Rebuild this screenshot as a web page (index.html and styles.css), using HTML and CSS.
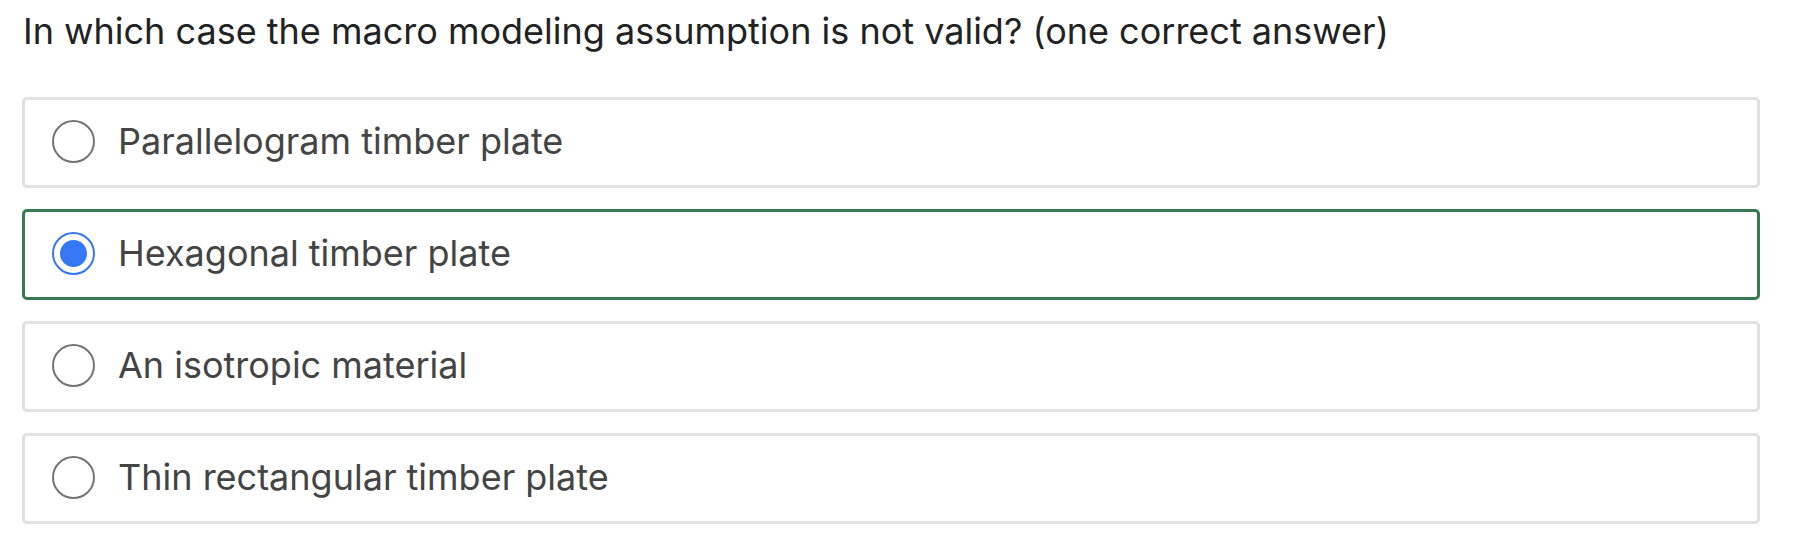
FILE: index.html
```html
<!DOCTYPE html>
<html>
<head>
<meta charset="utf-8">
<link rel="stylesheet" href="styles.css">
</head>
<body>
<div class="quiz">
  <h1 class="question">In which case the macro modeling assumption is not valid? (one correct answer)</h1>
  <div class="options">
    <label class="option">
      <span class="radio"></span>
      <span class="label">Parallelogram timber plate</span>
    </label>
    <label class="option selected">
      <span class="radio checked"></span>
      <span class="label">Hexagonal timber plate</span>
    </label>
    <label class="option">
      <span class="radio"></span>
      <span class="label">An isotropic material</span>
    </label>
    <label class="option">
      <span class="radio"></span>
      <span class="label">Thin rectangular timber plate</span>
    </label>
  </div>
</div>
</body>
</html>
```
FILE: styles.css
```css
html, body {
  margin: 0;
  padding: 0;
  background: #ffffff;
}
body {
  font-family: Inter, "Noto Sans", sans-serif;
}
.quiz {
  padding: 0 38px 0 22px;
}
.question {
  margin: 0;
  padding-top: 9px;
  font-size: 36px;
  line-height: 44px;
  font-weight: 400;
  color: #222222;
  padding-left: 1px;
  height: 88px;
}
.options {
  display: flex;
  flex-direction: column;
  gap: 21px;
}
.option {
  display: flex;
  align-items: center;
  height: 91px;
  box-sizing: border-box;
  border: 3px solid #e0e0e0;
  border-radius: 5px;
  padding-left: 27px;
  gap: 23px;
}
.option.selected {
  border-color: #377a51;
}
.radio {
  width: 43px;
  height: 43px;
  box-sizing: border-box;
  border: 2px solid #757575;
  border-radius: 50%;
  display: flex;
  align-items: center;
  justify-content: center;
  flex: none;
  margin-bottom: 2px;
}
.radio.checked {
  border-color: #3478f6;
}
.radio.checked::after {
  content: "";
  width: 27px;
  height: 27px;
  border-radius: 50%;
  background: #3478f6;
}
.label {
  font-size: 36px;
  color: #444444;
  margin-bottom: 3px;
}
```
